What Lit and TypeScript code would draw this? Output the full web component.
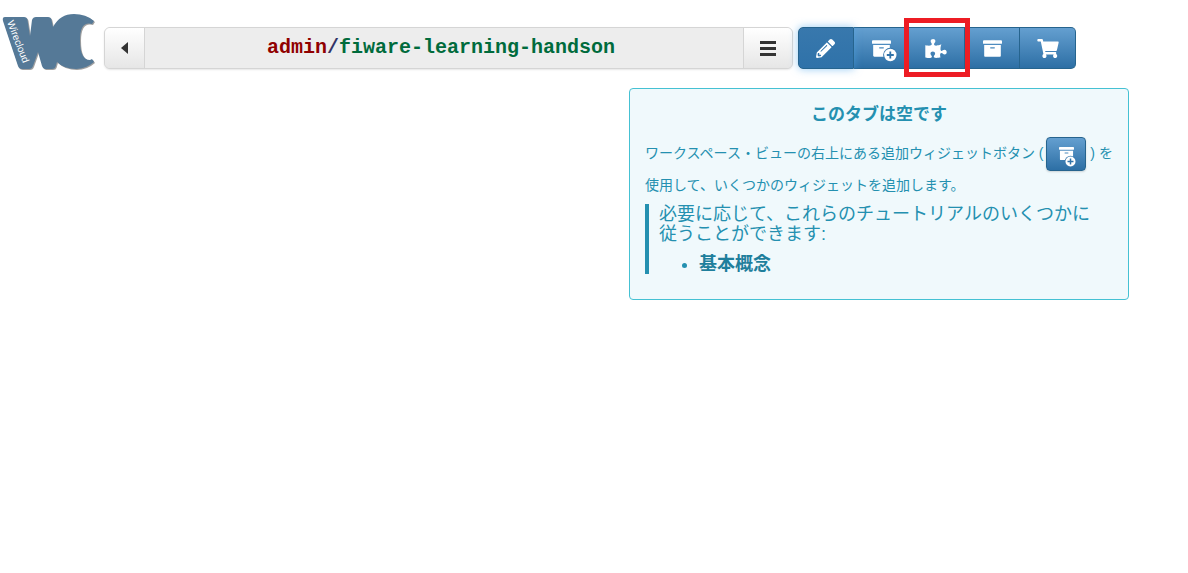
import { LitElement, html, svg, css } from "lit";
import { customElement } from "lit/decorators.js";

const ARCHIVE =
  "M32 448c0 17.700 14.300 32 32 32h384c17.700 0 32-14.300 32-32V160H32v288zm160-212c0-6.600 5.400-12 12-12h104c6.600 0 12 5.400 12 12v8c0 6.600-5.400 12-12 12H204c-6.600 0-12-5.400-12-12v-8zM480 32H32C14.300 32 0 46.300 0 64v48c0 8.800 7.200 16 16 16h480c8.800 0 16-7.200 16-16V64c0-17.700-14.300-32-32-32z";
const PENCIL =
  "M497.900 142.100l-46.100 46.100c-4.700 4.700-12.300 4.700-17 0l-111-111c-4.700-4.700-4.700-12.300 0-17l46.100-46.100c18.700-18.700 49.100-18.700 67.900 0l60.100 60.100c18.800 18.700 18.800 49.100 0 67.900zM284.200 99.800L21.600 362.400.4 483.900c-2.900 16.400 11.400 30.600 27.800 27.800l121.500-21.300 262.600-262.600c4.700-4.700 4.700-12.300 0-17l-111-111c-4.800-4.700-12.400-4.700-17.100 0zM124.100 339.900c-5.500-5.500-5.500-14.300 0-19.800l154-154c5.500-5.500 14.300-5.500 19.800 0s5.500 14.300 0 19.800l-154 154c-5.500 5.500-14.300 5.500-19.800 0zM88 424h48v36.300l-64.500 11.300-31.100-31.100L51.700 376H88v48z";
const PUZZLE =
  "M519.442 288.651c-41.519 0-59.500 31.593-82.058 31.593C377.409 320.244 432 144 432 144s-196.288 80-196.288-3.297c0-35.827 36.288-46.250 36.288-85.985C272 19.216 243.885 0 210.539 0c-34.654 0-66.366 18.891-66.366 56.346 0 41.364 31.711 59.277 31.711 81.750C175.885 207.719 0 166.758 0 166.758v333.237s178.635 41.047 178.635-28.662c0-22.473-40-40.107-40-81.471 0-37.456 29.250-56.346 63.577-56.346 33.673 0 61.788 19.216 61.788 54.717 0 39.735-36.288 50.158-36.288 85.985 0 60.803 129.675 25.730 181.230 25.730 0 0-34.725-120.101 25.827-120.101 35.962 0 46.423 36.152 86.308 36.152C556.712 416 576 387.990 576 354.443c0-34.199-18.962-65.792-56.558-65.792z";
const CART =
  "M528.120 301.319l47.273-208C578.806 78.301 567.391 64 551.990 64H159.208l-9.166-44.810C147.758 8.021 137.930 0 126.529 0H24C10.745 0 0 10.745 0 24v16c0 13.255 10.745 24 24 24h69.883l70.248 343.435C147.325 417.100 136 435.222 136 456c0 30.928 25.072 56 56 56s56-25.072 56-56c0-15.674-6.447-29.835-16.824-40h209.647C430.447 426.165 424 440.326 424 456c0 30.928 25.072 56 56 56s56-25.072 56-56c0-22.172-12.888-41.332-31.579-50.405l5.517-24.276c3.413-15.018-8.002-29.319-23.403-29.319H218.117l-6.545-32h293.145c11.206 0 20.920-7.754 23.403-18.681z";
const LOGO =
  "M5 5H24Q27 5 27.500 8L30 24L32 8Q33 5 36 5H48Q51 5 51.500 8L53 15Q60 2 74 2Q86 2 94 9L92 12Q80 9 80 28Q80 48 90 48L92 47L94 50Q86 57 76 57Q64 57 57 50L55.500 55Q55 57 52 57H45Q43 57 42 54L38 40L33 54Q32 57 29 57H22Q19 57 18 54L3 9Q2 5 5 5Z";

const glyph = (path: string, width = 512) =>
  html`<svg class="icon ${width > 512 ? "wide" : ""}" viewBox="0 0 ${width} 512" aria-hidden="true">
    <path d=${path} />
  </svg>`;

const archivePlus = html`<svg class="icon-plus" viewBox="0 0 27 23" aria-hidden="true">
  ${svg`<path transform="scale(.0371)" d=${ARCHIVE} />
  <circle cx="18.300" cy="16" r="7.200" fill="#3a79ae" />
  <circle cx="18.300" cy="16" r="6.200" />
  <path d="M18.300 12.500v7M14.800 16h7" stroke="#3173a9" stroke-width="1.800" />`}
</svg>`;

const archivePlusSmall = html`<svg class="icon-small" viewBox="0 0 18 21" aria-hidden="true">
  ${svg`<path transform="scale(.0293)" d=${ARCHIVE} />
  <circle cx="11.500" cy="15.500" r="5.800" fill="#3a79ae" />
  <circle cx="11.500" cy="15.500" r="5" />
  <path d="M11.500 12.500v6M8.500 15.500h6" stroke="#3173a9" stroke-width="1.500" />`}
</svg>`;

@customElement("app-root")
export class AppRoot extends LitElement {
  static styles = css`
    :host {
      display: block;
      min-height: 100vh;
      background: #fff;
      font-family: "Liberation Sans", "Noto Sans CJK JP", sans-serif;
      font-size: 14px;
    }
    * {
      box-sizing: border-box;
    }
    .header {
      display: flex;
      align-items: flex-start;
      padding: 12px 112px 0 0;
    }
    .logo {
      width: 104px;
      height: 60px;
      flex: none;
    }
    .logo text {
      font-size: 10px;
      fill: #fff;
    }
    .path {
      flex: 1;
      min-width: 0;
      display: flex;
      height: 42px;
      margin-top: 15px;
      border: 1px solid #d5d5d5;
      border-radius: 6px;
      background: #ededed;
      box-shadow: 0 1px 2px rgba(0, 0, 0, 0.1);
      overflow: hidden;
    }
    .crumbs {
      flex: 1;
      min-width: 0;
      margin: 0;
      padding-right: 6px;
      text-align: center;
      font: bold 20px/39px "Liberation Mono", monospace;
      color: #336;
      white-space: nowrap;
    }
    .owner {
      color: #900000;
    }
    .name {
      color: #006b3c;
    }
    button {
      margin: 0;
      padding: 0;
      display: flex;
      align-items: center;
      justify-content: center;
      cursor: pointer;
    }
    .plain {
      width: 40px;
      border: 0;
      border-right: 1px solid #d5d5d5;
      background: linear-gradient(#fff, #e6e6e6);
      fill: #333;
    }
    .plain.menu {
      width: 49px;
      border-right: 0;
      border-left: 1px solid #d5d5d5;
    }
    .tools {
      display: flex;
      width: 278px;
      height: 42px;
      margin: 15px 0 0 5px;
    }
    .slot {
      position: relative;
      flex: 1;
      display: flex;
    }
    .blue {
      border: 1px solid #26648e;
      background: linear-gradient(#649fd0, #2d6fa5);
      fill: #fff;
    }
    .slot .blue {
      flex: 1;
      border-left-width: 0;
    }
    .slot:first-child .blue {
      border-left-width: 1px;
      border-radius: 5px 0 0 5px;
    }
    .slot:last-child .blue {
      border-radius: 0 5px 5px 0;
    }
    .blue.active {
      background: linear-gradient(#3878ad, #2f72a9);
      box-shadow: 0 0 8px rgba(82, 168, 236, 0.6);
    }
    .slot:first-child {
      z-index: 1;
    }
    .marker {
      position: absolute;
      inset: -9px -5px -8px;
      border: 5px solid #ed1c24;
      z-index: 2;
      pointer-events: none;
    }
    .icon {
      width: 19px;
      height: 19px;
    }
    .icon.wide {
      width: 22px;
    }
    .icon-plus {
      width: 27px;
      height: 23px;
      margin: 4px 0 0 10px;
    }
    .icon-small {
      width: 18px;
      height: 21px;
      margin: 5px 0 0 4px;
    }
    .notice {
      width: 500px;
      max-width: 100%;
      margin: 16px 59px 0 auto;
      padding: 16px 15px 25px;
      border: 1px solid #45c1d3;
      border-radius: 4px;
      background: #f0f9fc;
      color: #2490b0;
    }
    h4 {
      margin: 0;
      text-align: center;
      font-size: 17px;
      line-height: 20px;
    }
    .hint {
      margin: 12px 0 5px;
      line-height: 28px;
    }
    .sample {
      display: inline-flex;
      width: 40px;
      height: 34px;
      margin: 0 0 0 3px;
      vertical-align: middle;
      border-radius: 4px;
      box-shadow: 0 1px 2px rgba(0, 0, 0, 0.15);
    }
    blockquote {
      margin: 0;
      padding: 0 15px 0 10px;
      border-left: 4px solid #2490b0;
      font-size: 18px;
      line-height: 20px;
    }
    blockquote p {
      margin: 0;
    }
    ul {
      margin: 0;
      padding: 10px 0 0 40px;
    }
    a {
      color: #1f7f9c;
      font-weight: bold;
      text-decoration: none;
    }
  `;

  render() {
    return html`
      <header class="header">
        <svg class="logo" viewBox="0 0 104 60" role="img" aria-label="Wirecloud">
          <path d=${LOGO} transform="translate(1 1)" fill="#777" opacity="0.7" />
          <path d=${LOGO} fill="#557997" />
          <text transform="translate(7 10) rotate(69)">Wirecloud</text>
        </svg>
        <nav class="path" aria-label="Workspace">
          <button class="plain" aria-label="Back">
            <svg width="7" height="12" viewBox="0 0 7 12"><path d="M7 0v12L0 6z" /></svg>
          </button>
          <h1 class="crumbs"><span class="owner">admin</span>/<span class="name">fiware-learning-handson</span></h1>
          <button class="plain menu" aria-label="Menu">
            <svg width="16" height="15" viewBox="0 0 16 15"><path d="M0 0h16v3H0zM0 6h16v3H0zM0 12h16v3H0z" /></svg>
          </button>
        </nav>
        <div class="tools" role="toolbar">
          <div class="slot"><button class="blue active" aria-label="Edit">${glyph(PENCIL)}</button></div>
          <div class="slot"><button class="blue" aria-label="Add widget">${archivePlus}</button></div>
          <div class="slot">
            <button class="blue" aria-label="Wiring">${glyph(PUZZLE, 576)}</button>
            <span class="marker"></span>
          </div>
          <div class="slot"><button class="blue" aria-label="My resources">${glyph(ARCHIVE)}</button></div>
          <div class="slot"><button class="blue" aria-label="Marketplace">${glyph(CART, 576)}</button></div>
        </div>
      </header>
      <main>
        <section class="notice">
          <h4>このタブは空です</h4>
          <p class="hint">
            ワークスペース・ビューの右上にある追加ウィジェットボタン (<button class="blue sample" aria-label="Add widget">${archivePlusSmall}</button> ) を使用して、いくつかのウィジェットを追加します。
          </p>
          <blockquote>
            <p>必要に応じて、これらのチュートリアルのいくつかに従うことができます:</p>
            <ul>
              <li><a href="#basic">基本概念</a></li>
            </ul>
          </blockquote>
        </section>
      </main>
    `;
  }
}
